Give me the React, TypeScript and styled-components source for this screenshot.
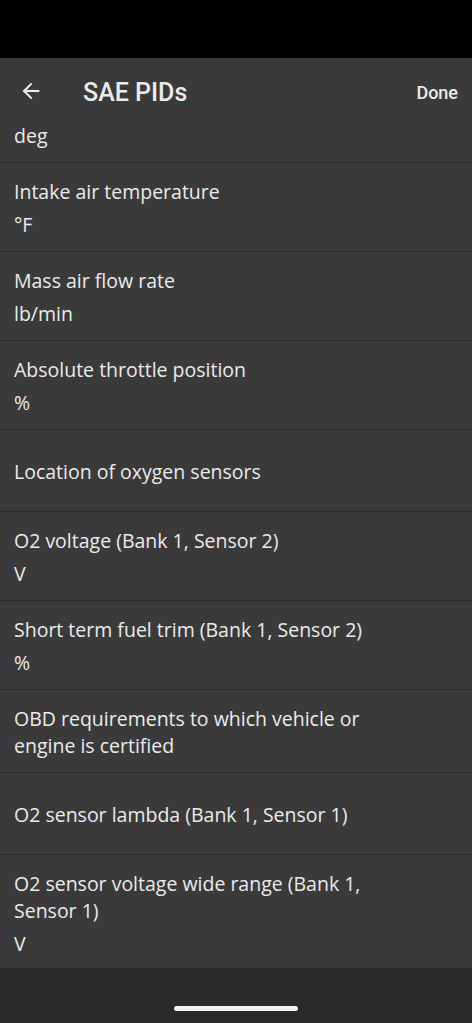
import React from 'react';
import styled, { createGlobalStyle } from 'styled-components';

const colors = {
  statusBar: '#000000',
  surface: '#3a3a3a',
  divider: '#2a2a2a',
  navBar: '#2a2a2a',
  text: '#ebebeb',
  handle: '#f2f2f2',
};

const GlobalStyle = createGlobalStyle`
  html, body {
    margin: 0;
    padding: 0;
    background: ${colors.surface};
  }
  * {
    box-sizing: border-box;
  }
`;

const Screen = styled.div`
  width: 472px;
  height: 1023px;
  display: flex;
  flex-direction: column;
  background: ${colors.surface};
  overflow: hidden;
`;

const StatusBar = styled.div`
  height: 58px;
  flex-shrink: 0;
  background: ${colors.statusBar};
`;

const Toolbar = styled.header`
  height: 64px;
  flex-shrink: 0;
  display: flex;
  align-items: center;
  padding: 4px 14px 0 16px;
  background: ${colors.surface};
  position: relative;
  z-index: 1;
`;

const BackButton = styled.button`
  width: 30px;
  height: 30px;
  padding: 0;
  border: none;
  background: none;
  display: flex;
  align-items: center;
  justify-content: center;
  color: ${colors.text};
  margin-top: -2px;
`;

const Title = styled.h1`
  flex: 1;
  margin: 0 0 0 37px;
  font-family: Roboto, 'Liberation Sans', sans-serif;
  font-size: 25px;
  font-weight: 500;
  color: ${colors.text};
`;

const DoneButton = styled.button`
  border: none;
  background: none;
  padding: 0;
  font-family: Roboto, 'Liberation Sans', sans-serif;
  font-size: 18px;
  font-weight: 500;
  color: ${colors.text};
`;

const ListViewport = styled.div`
  flex: 1;
  overflow: hidden;
`;

const List = styled.ul<{ $scroll: number }>`
  list-style: none;
  margin: ${p => -p.$scroll}px 0 0;
  padding: 0;
`;

const Row = styled.li`
  min-height: 82px;
  padding: 15px 80px 13px 14px;
  border-bottom: 1px solid ${colors.divider};
  display: flex;
  flex-direction: column;
  justify-content: center;
  font-family: 'Open Sans', 'Noto Sans', sans-serif;
  font-size: 19.5px;
  line-height: 27px;
  color: ${colors.text};
`;

const RowTitle = styled.div``;

const RowUnit = styled.div`
  margin-top: 6px;
`;

const NavBar = styled.div`
  height: 55px;
  flex-shrink: 0;
  background: ${colors.navBar};
  display: flex;
  align-items: flex-end;
  justify-content: center;
  padding-bottom: 12px;
`;

const Handle = styled.div`
  width: 124px;
  height: 5px;
  border-radius: 3px;
  background: ${colors.handle};
`;

const pids: { name: string; unit?: string }[] = [
  { name: 'Timing advance', unit: 'deg' },
  { name: 'Intake air temperature', unit: '°F' },
  { name: 'Mass air flow rate', unit: 'lb/min' },
  { name: 'Absolute throttle position', unit: '%' },
  { name: 'Location of oxygen sensors' },
  { name: 'O2 voltage (Bank 1, Sensor 2)', unit: 'V' },
  { name: 'Short term fuel trim (Bank 1, Sensor 2)', unit: '%' },
  { name: 'OBD requirements to which vehicle or engine is certified' },
  { name: 'O2 sensor lambda (Bank 1, Sensor 1)' },
  { name: 'O2 sensor voltage wide range (Bank 1, Sensor 1)', unit: 'V' },
];

const App: React.FC = () => (
  <>
    <GlobalStyle />
    <Screen>
      <StatusBar />
      <Toolbar>
        <BackButton aria-label="Back">
          <svg width="22" height="22" viewBox="0 0 24 24" fill="none" stroke="currentColor" strokeWidth="2.3" strokeLinecap="square">
            <path d="M20 12H5" />
            <path d="M12 4.5L4.5 12L12 19.5" />
          </svg>
        </BackButton>
        <Title>SAE PIDs</Title>
        <DoneButton>Done</DoneButton>
      </Toolbar>
      <ListViewport>
        <List $scroll={48}>
          {pids.map(pid => (
            <Row key={pid.name}>
              <RowTitle>{pid.name}</RowTitle>
              {pid.unit && <RowUnit>{pid.unit}</RowUnit>}
            </Row>
          ))}
        </List>
      </ListViewport>
      <NavBar>
        <Handle />
      </NavBar>
    </Screen>
  </>
);

export default App;
